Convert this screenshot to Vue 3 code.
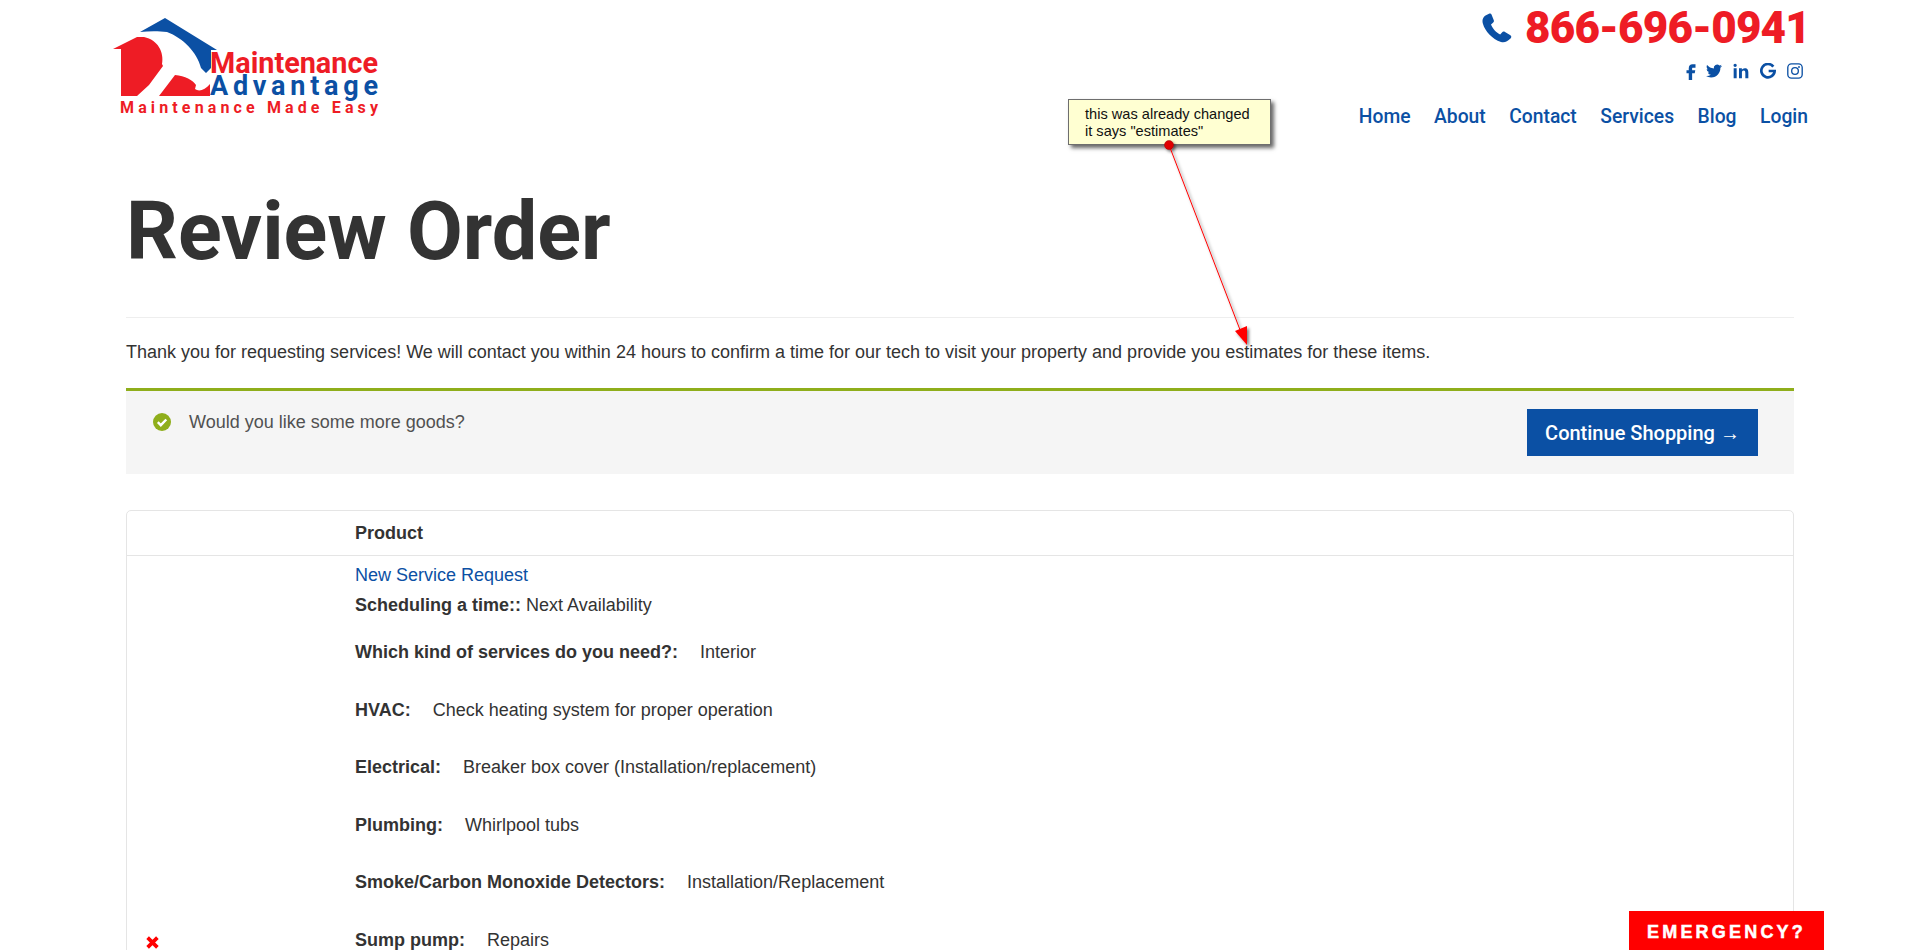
<script setup>
const rows = [
  { label: 'Which kind of services do you need?:', value: 'Interior' },
  { label: 'HVAC:', value: 'Check heating system for proper operation' },
  { label: 'Electrical:', value: 'Breaker box cover (Installation/replacement)' },
  { label: 'Plumbing:', value: 'Whirlpool tubs' },
  { label: 'Smoke/Carbon Monoxide Detectors:', value: 'Installation/Replacement' },
  { label: 'Sump pump:', value: 'Repairs' }
]
const nav = ['Home', 'About', 'Contact', 'Services', 'Blog', 'Login']
</script>

<template>
  <div class="page">
    <header class="header">
      <svg class="logo" viewBox="0 0 270 100" width="270" height="100" aria-label="Maintenance Advantage">
        <path fill="#0b50a4" d="M27 14 L52 0 L104 32 L98 32 L98 50 L93 55 L88 50 C84 34 70 20 54 14 C46 13 36 13 27 14 Z" />
        <path fill="#ee1c25" d="M0 31 L24 19 L31 19 C45 22 51 34 49 46 L50 48 L36 67 L24 78 L8 78 L8 31 Z" />
        <path fill="#ee1c25" d="M46 78 L62 57 C72 58 80 62 83 67 L82 71 C86 74 92 72 97 66 L97 78 Z" />
        <text class="lg1" x="97" y="55" textLength="168" lengthAdjust="spacingAndGlyphs">Maintenance</text>
        <text class="lg2" x="97" y="77" textLength="168" lengthAdjust="spacing">Advantage</text>
        <text class="lg3" x="7" y="95" textLength="258" lengthAdjust="spacing">Maintenance Made Easy</text>
      </svg>
      <div class="contact">
        <div class="phone">
          <svg class="phone-icon" viewBox="0 0 30 30" width="30" height="30">
            <path fill="#0b50a4" d="M7.500 0.500 L3.500 2.500 C0.500 4.500 0 7.500 1 11 C3 18 10 26 19 29 C22.500 30 25.500 28.500 28.500 25.500 C29.800 24 29.500 23 28 22 L23 19 C21.800 18.300 20.800 18.500 20 19.500 L18.200 21.500 C14.500 20 10.500 15.500 9 11.500 L11 9.800 C12 9 12.200 8 11.600 6.800 L9.500 1.500 C9 0.500 8.500 0.200 7.500 0.500 Z" />
          </svg>
          <span class="phone-number">866-696-0941</span>
        </div>
        <div class="social">
          <svg class="s-f" viewBox="0 0 24 24" width="18" height="18"><path fill="#0b50a4" d="M14 7.500h4V3h-4c-3 0-5 2.200-5 5.200V11H6v4h3v9h4.500v-9H17l.7-4h-4.200V8.400c0-.5.200-.9.500-.9z" /></svg>
          <svg viewBox="0 0 24 24" width="16" height="16"><path fill="#0b50a4" d="M23.953 4.570a10 10 0 01-2.825.775 4.958 4.958 0 002.163-2.723c-.951.555-2.005.959-3.127 1.184a4.920 4.920 0 00-8.384 4.482C7.690 8.095 4.067 6.130 1.640 3.162a4.822 4.822 0 00-.666 2.475c0 1.710.870 3.213 2.188 4.096a4.904 4.904 0 01-2.228-.616v.060a4.923 4.923 0 003.946 4.827 4.996 4.996 0 01-2.212.085 4.936 4.936 0 004.604 3.417 9.867 9.867 0 01-6.102 2.105c-.390 0-.779-.023-1.170-.067a13.995 13.995 0 007.557 2.209c9.053 0 13.998-7.496 13.998-13.985 0-.210 0-.420-.015-.630A9.935 9.935 0 0024 4.590z" /></svg>
          <svg viewBox="0 0 24 24" width="16" height="16"><path fill="#0b50a4" d="M1 8h4.500v15H1zM3.200 1a2.500 2.500 0 110 5 2.500 2.500 0 010-5zM9 8h4.300v2.100C14 8.800 15.600 7.700 17.700 7.700c4.400 0 5.300 2.900 5.300 6.700V23h-4.500v-7.700c0-1.800-.1-3.900-2.500-3.900s-2.600 1.900-2.600 3.800V23H9z" /></svg>
          <svg viewBox="0 0 24 24" width="16" height="16"><path fill="none" stroke="#0b50a4" stroke-width="4" d="M20 5.500 A10 10 0 1 0 22 12 L13 12" /></svg>
          <svg viewBox="0 0 24 24" width="16" height="16"><rect x="1.200" y="1.200" width="21.600" height="21.600" rx="5.500" fill="none" stroke="#0b50a4" stroke-width="2" /><circle cx="12" cy="12" r="5" fill="none" stroke="#0b50a4" stroke-width="2" /><circle cx="18" cy="6" r="1.400" fill="#0b50a4" /></svg>
        </div>
        <nav class="nav">
          <a v-for="item in nav" :key="item" class="nav-link">{{ item }}</a>
        </nav>
      </div>
    </header>

    <main class="main">
      <h1 class="title">Review Order</h1>
      <p class="intro">Thank you for requesting services! We will contact you within 24 hours to confirm a time for our tech to visit your property and provide you estimates for these items.</p>

      <div class="notice">
        <div class="notice-msg">
          <svg viewBox="0 0 18 18" width="18" height="18"><circle cx="9" cy="9" r="9" fill="#8fae1b" /><path d="M4.800 9.200 L7.800 12.200 L13.300 6.500" fill="none" stroke="#fff" stroke-width="2.400" /></svg>
          <span>Would you like some more goods?</span>
        </div>
        <a class="btn">Continue Shopping →</a>
      </div>

      <section class="table">
        <div class="table-head"><span>Product</span></div>
        <div class="table-body">
          <div class="remove">
            <svg viewBox="0 0 12 12" width="13" height="13"><path d="M1.500 1.500 L10.500 10.500 M10.500 1.500 L1.500 10.500" stroke="#ff0000" stroke-width="3.400" fill="none" /></svg>
          </div>
          <div class="details">
            <a class="product-link">New Service Request</a>
            <div class="schedule"><b>Scheduling a time::</b> Next Availability</div>
            <div class="rows">
              <div v-for="row in rows" :key="row.label" class="row">
                <b>{{ row.label }}</b><span>{{ row.value }}</span>
              </div>
            </div>
          </div>
        </div>
      </section>
    </main>

    <a class="emergency">EMERGENCY?</a>

    <div class="note">this was already changed<br />it says "estimates"</div>
    <svg class="arrow" width="1920" height="950" viewBox="0 0 1920 950">
      <defs>
        <filter id="sh" x="-50%" y="-50%" width="200%" height="200%">
          <feDropShadow dx="2" dy="2" stdDeviation="1.500" flood-color="#000" flood-opacity="0.5" />
        </filter>
      </defs>
      <g filter="url(#sh)">
        <line x1="1169" y1="145" x2="1242" y2="335" stroke="#ff0000" stroke-width="1" />
        <circle cx="1169" cy="145" r="4.500" fill="#e00000" stroke="#a00000" stroke-width="0.500" />
        <polygon points="1235,331 1247,326 1247,345" fill="#ff0000" />
      </g>
    </svg>
  </div>
</template>

<style>
html, body { margin: 0; overflow: hidden; background: #fff; }
</style>

<style scoped>
.page {
  position: relative;
  height: 950px;
  overflow: hidden;
  font-family: "Liberation Sans", Arial, sans-serif;
  font-size: 18px;
  color: #333;
}
.header {
  display: flex;
  justify-content: space-between;
  padding: 0 113px;
  height: 138px;
}
.logo { margin-top: 18px; overflow: visible; font-family: "Roboto", sans-serif; font-weight: 700; }
.lg1 { font-size: 29px; fill: #ee1c25; }
.lg2 { font-size: 27px; fill: #0b50a4; }
.lg3 { font-size: 16px; fill: #ee1c25; }
.contact { display: flex; flex-direction: column; align-items: flex-end; }
.phone { display: flex; align-items: center; gap: 13px; height: 56px; margin-right: -3px; }
.phone-number {
  font-family: "Roboto", sans-serif;
  font-weight: 900;
  font-size: 44px;
  letter-spacing: -0.8px;
  color: #ee1c25;
}
.social { display: flex; align-items: center; gap: 11px; height: 30px; padding-right: 4px; }
.s-f { margin-right: -5px; }
.nav { display: flex; gap: 23.500px; margin-top: 19px; margin-right: -1px; }
.nav-link {
  font-family: "Roboto", sans-serif;
  font-weight: 500;
  font-size: 19.300px;
  line-height: 24px;
  color: #0b50a4;
}
.main { padding: 0 126px; }
.title {
  margin: 0;
  height: 180px;
  box-sizing: border-box;
  padding-top: 49px;
  border-bottom: 1px solid #eee;
  font-family: "Roboto", sans-serif;
  font-weight: 700;
  font-size: 81px;
  line-height: 90px;
  color: #333;
}
.intro { margin: 0; padding: 23px 0 25px; line-height: 22px; }
.notice {
  box-sizing: border-box;
  height: 86px;
  border-top: 3px solid #8fae1b;
  background: #f5f5f5;
  display: flex;
  justify-content: space-between;
  padding: 18px 36px 0 27px;
}
.notice-msg { display: flex; align-items: flex-start; gap: 18px; line-height: 26px; color: #515151; }
.notice-msg svg { margin-top: 4px; }
.btn {
  box-sizing: border-box;
  width: 231px;
  height: 47px;
  background: #0b50a4;
  color: #fff;
  font-family: "Roboto", sans-serif;
  font-weight: 500;
  font-size: 20px;
  line-height: 48px;
  text-align: center;
}
.table {
  margin-top: 36px;
  border: 1px solid #e5e5e5;
  border-radius: 5px;
  height: 600px;
}
.table-head {
  height: 45px;
  box-sizing: border-box;
  border-bottom: 1px solid #e5e5e5;
  padding-left: 228px;
  font-weight: 700;
  line-height: 45px;
}
.table-body { position: relative; padding-left: 228px; }
.remove { position: absolute; left: 18.500px; top: 380px; line-height: 0; }
.details { padding-top: 6px; }
.product-link { display: block; line-height: 26px; color: #0b50a4; }
.schedule { line-height: 26px; margin-top: 4px; }
.rows { margin-top: 6px; }
.row { display: flex; gap: 22px; height: 57.500px; align-items: center; }
.emergency {
  position: fixed;
  left: 1629px;
  top: 911px;
  width: 195px;
  height: 39px;
  background: #ff0000;
  color: #fff;
  font-family: "Liberation Sans", Arial, sans-serif;
  font-weight: 700;
  font-size: 18px;
  letter-spacing: 3.200px;
  line-height: 43px;
  text-align: center;
  -webkit-text-stroke: 0.5px #fff;
  overflow: hidden;
}
.note {
  position: absolute;
  left: 1068px;
  top: 99px;
  width: 203px;
  height: 46px;
  box-sizing: border-box;
  padding: 6px 0 0 16px;
  background: #ffffd2;
  border: 1px solid #6e6e6e;
  box-shadow: 3px 3px 4px rgba(0, 0, 0, 0.6);
  font-size: 14.600px;
  line-height: 17px;
  color: #111;
}
.arrow { position: absolute; left: 0; top: 0; pointer-events: none; }
</style>
